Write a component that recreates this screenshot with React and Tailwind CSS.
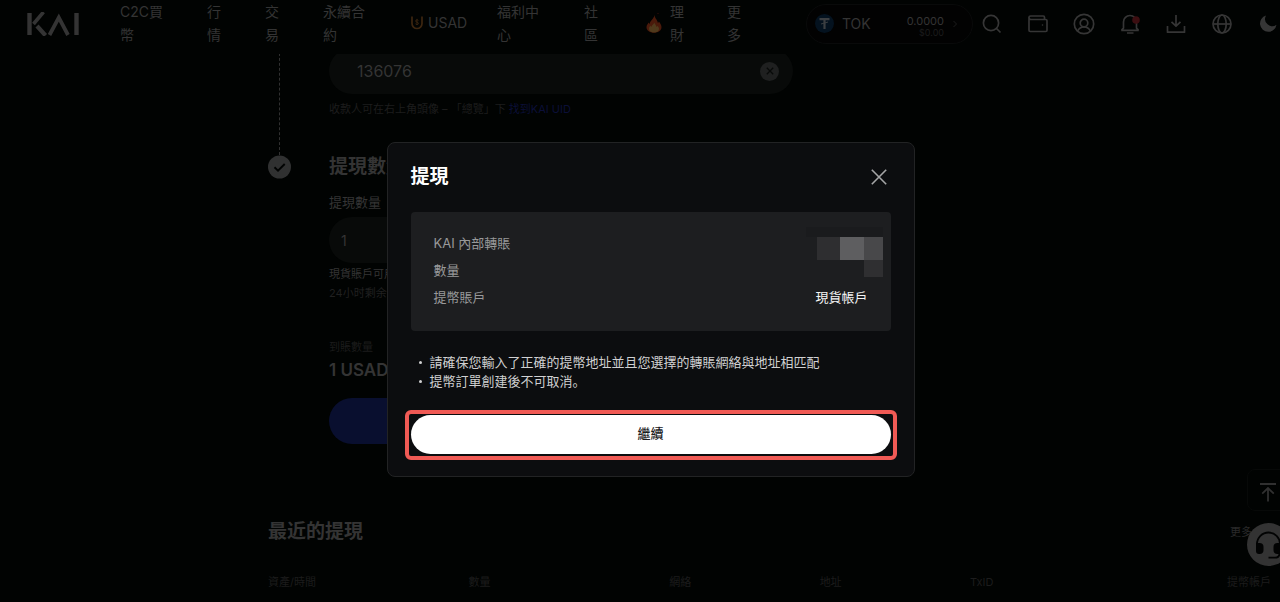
import { useState } from "react";

const NAV = [
  { label: "C2C買幣", width: "w-[43px]" },
  { label: "行情", width: "w-[14px]" },
  { label: "交易", width: "w-[14px]" },
  { label: "永續合約", width: "w-[43px]" },
  { label: "USAD", width: "w-[43px]", icon: "usad" },
  { label: "福利中心", width: "w-[43px]" },
  { label: "社區", width: "w-[18px]" },
  { label: "理財", width: "w-[37px]", icon: "flame" },
  { label: "更多", width: "w-[14px]" },
];

function Logo() {
  return (
    <svg width="54" height="24" viewBox="0 0 54 24" fill="none" stroke="#343434" strokeWidth="4.4" role="img" aria-label="KAI">
      <line x1="3.5" y1="1" x2="3.5" y2="23" />
      <line x1="17.5" y1="0" x2="7.5" y2="12" strokeWidth="3.6" />
      <line x1="11" y1="14" x2="19.5" y2="23.5" strokeWidth="4.2" />
      <polyline points="23.5,23 32.8,5.5 42,23" strokeWidth="3.8" strokeLinejoin="miter" />
      <line x1="50.5" y1="1" x2="50.5" y2="23" />
    </svg>
  );
}

function UsadIcon() {
  return (
    <svg width="14" height="16" viewBox="0 0 14 16" fill="none" className="shrink-0" aria-hidden="true">
      <path d="M2 1.5v7a5 5 0 0 0 10 0v-7" stroke="#3d2610" strokeWidth="1.7" />
      <path d="M8.4 5.4C8 4.6 5.6 4.6 5.6 6c0 1.5 2.9.9 2.9 2.4 0 1.4-2.5 1.4-3 .4M7 3.8v6.2" stroke="#3d2610" strokeWidth=".9" />
    </svg>
  );
}

function FlameIcon() {
  return (
    <svg width="16" height="22" viewBox="0 0 16 22" className="shrink-0" aria-hidden="true">
      <circle cx="12" cy="1.6" r=".6" fill="#3a100a" />
      <path d="M8.500 3c.3 2.500 1.700 4 2.500 5.500.5.900.8 1.700.9 2.500.6-.4.9-.9 1-1.500C14.500 11.500 15.500 13.300 15.500 15.300 15.500 18.700 12 20.800 8 20.800S.5 18.700.5 15.300C.5 13.300 1.700 12 2.800 10.600c.2.800.5 1.200.9 1.500C3.800 8.500 8 7 8.500 3Z" fill="#4a1a0b" />
      <path d="M8.300 10.500c.3 1.500 1.900 2.600 2.300 4.500.5-.3.8-.7.900-1.300 1 1.300 1.500 2.100 1.500 3.200 0 2.200-2.200 3.600-5 3.600s-5-1.400-5-3.500c0-1.400.7-2.400 1.500-3.400.1.800.4 1.200.8 1.500.2-2 2.600-2.700 3-4.600Z" fill="#4f3a1c" />
    </svg>
  );
}

function TokenIcon() {
  return (
    <svg width="19" height="19" viewBox="0 0 19 19" aria-hidden="true">
      <circle cx="9.5" cy="9.5" r="9.5" fill="#04121f" />
      <path d="M4.500 4h10v2.200h-3.900V15H8.400V6.200H4.500Z" fill="#3c3f42" />
      <path d="M6 10l7-2" stroke="#3c3f42" strokeWidth="1" />
    </svg>
  );
}

const ICONS = [
  {
    name: "搜尋",
    art: (
      <>
        <circle cx="10" cy="10" r="7.6" />
        <path d="M15.500 15.500l4 4" />
      </>
    ),
  },
  {
    name: "錢包",
    art: (
      <>
        <path d="M17.500 6.500V4.200a1.200 1.200 0 0 0-1.200-1.200H3.500A1.500 1.500 0 0 0 2 4.500" />
        <path d="M2 4.500v12.800c0 .8.500 1.200 1.200 1.200h15.600c.7 0 1.200-.4 1.200-1.200V7.700c0-.7-.5-1.200-1.200-1.200H3.700C2.700 6.500 2 5.600 2 4.500Z" />
        <circle cx="15.5" cy="12" r=".8" fill="#363636" stroke="none" />
      </>
    ),
  },
  {
    name: "用戶",
    art: (
      <>
        <circle cx="11" cy="11" r="9.7" />
        <circle cx="11" cy="10" r="3.8" />
        <path d="M4.600 18c1.200-2.500 3.600-4.200 6.400-4.200s5.200 1.700 6.400 4.200" />
      </>
    ),
  },
  {
    name: "通知",
    art: (
      <>
        <path d="M4.500 15.500V9a6.500 6.500 0 0 1 13 0v6.500M2.200 17.400h17.600M2.500 17.200l2-2M19.500 17.200l-2-2M8 20h6.500" />
        <circle cx="17" cy="7" r="3.8" fill="#3c0e11" stroke="none" />
      </>
    ),
  },
  { name: "下載", art: <path d="M11 2v11M6.500 8.800L11 13.200l4.500-4.400M2.500 13v6.200h17V13" /> },
  {
    name: "語言",
    art: (
      <>
        <circle cx="11" cy="11" r="9" />
        <ellipse cx="11" cy="11" rx="4.2" ry="9" />
        <path d="M2 11h18" />
      </>
    ),
  },
  {
    name: "深色模式",
    art: <path d="M9 2.500a7.200 7.200 0 0 0 10.500 9.300A8.300 8.300 0 1 1 9 2.500Z" fill="#363636" stroke="none" />,
  },
];

function Header() {
  return (
    <header className="relative z-10 flex h-[54px] items-center justify-between bg-[#010302] pb-[7px] pl-[26px] pr-[22px]">
      <div className="flex shrink-0 items-center">
        <a href="#home" className="mr-10">
          <Logo />
        </a>
        <nav className="flex items-center gap-11 pb-0.5 text-[14px] leading-[23px] text-[#343434]">
          {NAV.map((item) => (
            <a key={item.label} href="#nav" className={`flex shrink-0 items-center ${item.width} ${item.icon === "flame" ? "gap-2" : "gap-1"}`}>
              {item.icon === "usad" && <UsadIcon />}
              {item.icon === "flame" && <FlameIcon />}
              <span>{item.label}</span>
            </a>
          ))}
        </nav>
      </div>
      <div className="flex shrink-0 items-center">
        <button type="button" className="mr-2 flex h-10 w-[167px] items-center rounded-full border border-[#090a0a] bg-[#020202] pl-2 pr-3.5">
          <TokenIcon />
          <span className="ml-2 text-[14px] text-[#343434]">TOK</span>
          <span className="ml-auto flex flex-col items-end pt-1.5">
            <span className="text-[11px] leading-3 text-[#343434]">0.0000</span>
            <span className="text-[9px] leading-[11px] text-[#1c1c1c]">$0.00</span>
          </span>
          <svg width="6" height="8" viewBox="0 0 6 8" fill="none" stroke="#1c1c1c" className="ml-2" aria-hidden="true">
            <path d="M1.500 1l3 3-3 3" />
          </svg>
        </button>
        <div className="flex gap-6">
          {ICONS.map((icon) => (
            <button key={icon.name} type="button" aria-label={icon.name}>
              <svg width="22" height="22" viewBox="0 0 22 22" fill="none" stroke="#363636" strokeWidth="1.7" strokeLinejoin="round">
                {icon.art}
              </svg>
            </button>
          ))}
        </div>
      </div>
    </header>
  );
}

function WithdrawForm() {
  return (
    <form className="-mt-1.5">
      <div className="flex">
        <div className="flex w-[61px] shrink-0 pl-[11px]">
          <span className="border-l border-dashed border-[#303030]" />
        </div>
        <div className="h-[107px]">
          <div className="flex h-[46px] w-[464px] items-center rounded-full bg-[#080a09] pl-7 pr-3.5">
            <input aria-label="KAI UID" defaultValue="136076" className="min-w-0 flex-1 bg-transparent font-[Inter] text-[16px] text-[#343434] outline-none" />
            <button type="button" aria-label="清除" className="flex size-[19px] items-center justify-center rounded-full bg-[#1f2020]">
              <svg width="8" height="8" viewBox="0 0 8 8" stroke="#070908" strokeWidth="1.3">
                <path d="M.8.8l6.400 6.400M7.200.8L.8 7.200" />
              </svg>
            </button>
          </div>
          <p className="mt-1.5 text-[11px] leading-[18px] text-[#1d1d1d]">
            收款人可在右上角頭像 – 「總覽」下{" "}
            <a href="#uid" className="text-[#0b0f38]">找到KAI UID</a>
          </p>
        </div>
      </div>
      <div className="flex">
        <div className="w-[61px] shrink-0">
          <svg width="24" height="24" viewBox="0 0 24 24" fill="none" aria-hidden="true">
            <circle cx="11.5" cy="12" r="11.5" fill="#303131" />
            <path d="M6.500 12.300l3.500 3.300 6.700-6.600" stroke="#010302" strokeWidth="1.9" />
          </svg>
        </div>
        <div>
          <h2 className="text-[19px] font-bold leading-6 text-[#343434]">提現數量</h2>
          <label htmlFor="amount" className="mt-3.5 block text-[13px] leading-[18px] text-[#343434]">提現數量</label>
          <input id="amount" defaultValue="1" className="mt-1.5 block h-[46px] w-[464px] rounded-full bg-[#080a09] px-3 font-[Inter] text-[14px] text-[#343434] outline-none" />
          <p className="text-[11px] leading-[22px] text-[#343434]">現貨賬戶可用 1 USAD</p>
          <p className="text-[11px] leading-4 text-[#202020]">24小时剩余額度</p>
          <p className="mt-[37px] text-[11px] leading-[18px] text-[#1c1c1c]">到賬數量</p>
          <p className="mt-0.5 text-[17px] font-semibold leading-6 text-[#343434]">1 USAD</p>
          <button type="submit" className="mt-4 block h-[46px] w-[464px] rounded-full bg-[#090f2f] text-[14px] text-[#343434]">提現</button>
        </div>
      </div>
    </form>
  );
}

const COLUMNS = [
  ["資產/時間", "w-1/5"],
  ["數量", "w-1/5"],
  ["網絡", "w-[15%]"],
  ["地址", "w-[15%]"],
  ["TxID", "w-[15%]"],
  ["提幣帳戶", "w-[15%] text-right"],
];

function RecentWithdrawals() {
  return (
    <section className="mt-[76px]">
      <div className="flex items-center justify-between">
        <h2 className="text-[19px] font-bold leading-6 text-[#343434]">最近的提現</h2>
        <a href="#more" className="flex items-center text-[11px] text-[#2a2a2a]">
          更多
          <svg width="19" height="10" viewBox="0 0 19 10" fill="none" stroke="#2a2a2a" aria-hidden="true">
            <path d="M6 1l4 4-4 4" />
          </svg>
        </a>
      </div>
      <table className="mt-[29px] w-full table-fixed text-left text-[11px] leading-[18px] text-[#1c1c1c]">
        <thead>
          <tr>
            {COLUMNS.map(([name, style]) => (
              <th key={name} className={`font-normal ${style}`}>{name}</th>
            ))}
          </tr>
        </thead>
      </table>
    </section>
  );
}

function FloatingTools() {
  return (
    <div className="absolute bottom-9 right-0 z-10 flex w-[54px] flex-col gap-3">
      <button type="button" aria-label="返回頂部" className="flex h-[42px] w-[42px] items-center justify-center rounded-lg border border-[#070908] bg-[#010302] pt-1">
        <svg width="18" height="20" viewBox="0 0 18 20" fill="none" stroke="#303030" strokeWidth="1.8">
          <path d="M1 2h16M9 19.500V6M3.200 11.700L9 6l5.800 5.700" />
        </svg>
      </button>
      <button type="button" aria-label="客服" className="size-[43px] rounded-full bg-[#333]">
        <svg width="43" height="43" viewBox="0 0 43 43" fill="none">
          <path d="M10 22v-1a11.500 11.500 0 0 1 23 0v1" stroke="#020303" strokeWidth="1.8" />
          <path d="M9 20h3.500a4 4 0 0 1 4 4v3a4 4 0 0 1-4 4H12a3 3 0 0 1-3-3Z" fill="#020303" />
          <path d="M34 20h-3.500a4 4 0 0 0-4 4v3a4 4 0 0 0 4 4h.5a3 3 0 0 0 3-3Z" fill="#020303" />
          <path d="M32.500 30c0 3-2 4.700-4.500 4.700h-6.500" stroke="#020303" strokeWidth="1.8" />
        </svg>
      </button>
    </div>
  );
}

function MaskedValues() {
  return (
    <svg width="77" height="50" viewBox="0 0 77 50" className="absolute right-2 top-[15px]" aria-hidden="true">
      <path d="M0 0h77v10H0Z" fill="#1a1b1d" />
      <path d="M11 10h23v23H11Z" fill="#2e2e30" />
      <path d="M34 10h24v23H34Z" fill="#5e5e60" />
      <path d="M58 10h19v23H58Z" fill="#48484a" />
      <path d="M58 33h19v17H58Z" fill="#2f2f31" />
    </svg>
  );
}

function ConfirmDialog({ onClose }) {
  return (
    <div className="absolute inset-0 z-20 flex items-center justify-center pt-4">
      <div role="dialog" aria-modal="true" aria-labelledby="dialog-title" className="w-[528px] rounded-lg border border-[#222324] bg-[#0c0d0f] px-[23px] pb-4 pt-[22px]">
        <div className="flex items-center justify-between">
          <h1 id="dialog-title" className="text-[19px] font-bold leading-6 text-white">提現</h1>
          <button type="button" aria-label="關閉" onClick={onClose} className="mr-1">
            <svg width="16" height="16" viewBox="0 0 16 16" stroke="#a5a5a6" strokeWidth="1.6">
              <path d="M.8.8l14.400 14.400M15.200.8L.8 15.200" />
            </svg>
          </button>
        </div>
        <div className="relative mt-[23px] rounded bg-[#1d1e20] px-[23px] pb-5 pt-[18px] text-[13px] leading-[27px]">
          <dl className="text-[#98999a]">
            <div className="flex justify-between"><dt>KAI 內部轉賬</dt></div>
            <div className="flex justify-between"><dt>數量</dt></div>
            <div className="flex justify-between">
              <dt>提幣賬戶</dt>
              <dd className="text-[#f5f5f5]">現貨帳戶</dd>
            </div>
          </dl>
          <MaskedValues />
        </div>
        <ul className="mt-[22px] text-[13px] leading-[19px] text-[#d0d0d1]">
          {["請確保您輸入了正確的提幣地址並且您選擇的轉賬網絡與地址相匹配", "提幣訂單創建後不可取消。"].map((line) => (
            <li key={line} className="flex items-center">
              <span className="ml-2 mr-2 size-[3px] rounded-full bg-[#d0d0d1]" />
              {line}
            </li>
          ))}
        </ul>
        <div className="-mx-1.5 mt-[19px] rounded-md border-4 border-[#f05a55] px-0.5 pb-0.5 pt-px">
          <button type="button" className="block h-[39px] w-full rounded-full bg-white text-[13px] font-medium text-[#1b1c1e]">繼續</button>
        </div>
      </div>
    </div>
  );
}

export default function App() {
  const [open, setOpen] = useState(true);
  return (
    <div className="relative h-screen overflow-hidden bg-[#010302] font-[Inter,'Noto_Sans_CJK_SC',sans-serif]">
      <div className="relative h-full w-[calc(100%+21px)]">
        <Header />
        <main className="pl-[268px] pr-[30px]">
          <WithdrawForm />
          <RecentWithdrawals />
        </main>
        <FloatingTools />
        {open && <ConfirmDialog onClose={() => setOpen(false)} />}
      </div>
    </div>
  );
}
